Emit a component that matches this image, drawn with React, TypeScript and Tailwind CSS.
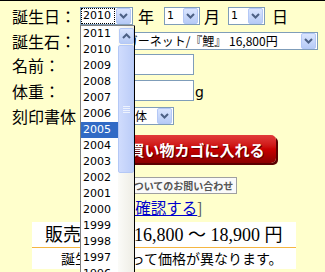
import React from "react";

const jp = { fontFamily: '"Noto Sans CJK JP", sans-serif' };
const ui = { fontFamily: '"DejaVu Sans", "Noto Sans CJK JP", sans-serif' };
const mincho = { fontFamily: '"Liberation Serif", "Noto Sans CJK JP", serif' };

const Chevron = ({ up }: { up?: boolean }) => (
	<svg width="9" height="6" viewBox="0 0 9 6">
		<polyline
			points={up ? "1,5 4.5,1.5 8,5" : "1,1 4.5,4.5 8,1"}
			fill="none"
			stroke="#4d6185"
			strokeWidth="2"
		/>
	</svg>
);

const ArrowBtn = ({ up }: { up?: boolean }) => (
	<div className="w-[15px] h-[16px] rounded-[2px] border border-[#b4c8f6] bg-gradient-to-b from-[#dae5fe] to-[#b7cbf6] flex items-center justify-center">
		<Chevron up={up} />
	</div>
);

const Select = ({ text, width, focus, kana, pad }: any) => (
	<div
		className={`${width} h-[18px] border border-[#7f9db9] bg-white flex items-center justify-between pl-[1px] pr-[1px] text-black ${
			kana ? "text-[12px]" : "text-[11px]"
		}`}
		style={kana ? jp : ui}
	>
		<span
			className={`${pad || "pl-[1px]"} pr-[3px] leading-[14px] whitespace-nowrap overflow-hidden ${
				focus ? "outline outline-1 outline-dotted outline-black" : ""
			}`}
		>
			{text}
		</span>
		<ArrowBtn />
	</div>
);

const years = [
	2011, 2010, 2009, 2008, 2007, 2006, 2005, 2004, 2003, 2002, 2001, 2000,
	1999, 1998, 1997, 1996,
];

const App = () => {
	return (
		<div className="relative w-[325px] h-[272px] overflow-hidden bg-[#ffffcc] border-t border-black text-black">
			<div className="pt-[2px]">
				{/* birthday */}
				<div className="h-[26px] flex items-center">
					<span className="w-[80px] pl-[12px] text-[16px]" style={jp}>
						誕生日：
					</span>
					<Select text="2010" width="w-[53px]" focus />
					<span className="ml-[5px] w-[26px] text-[16px]" style={jp}>
						年
					</span>
					<Select text="1" width="w-[36px]" />
					<span className="ml-[4px] w-[24px] text-[16px]" style={jp}>
						月
					</span>
					<Select text="1" width="w-[37px]" />
					<span className="ml-[7px] text-[16px]" style={jp}>
						日
					</span>
				</div>
				{/* birthstone */}
				<div className="h-[23px] flex items-center">
					<span className="w-[80px] pl-[12px] text-[16px]" style={jp}>
						誕生石：
					</span>
					<Select text="【1月】ガーネット/『鯉』 16,800円" width="w-[238px]" kana />
				</div>
				<div className="h-[25px] flex items-center">
					<span className="w-[80px] pl-[12px] text-[16px]" style={jp}>
						名前：
					</span>
					<div className="w-[114px] h-[21px] border border-[#7f9db9] bg-white" />
				</div>
				<div className="h-[27px] flex items-center">
					<span className="w-[80px] pl-[12px] text-[16px]" style={jp}>
						体重：
					</span>
					<div className="w-[114px] h-[21px] border border-[#7f9db9] bg-white" />
					<span className="ml-[1px] mt-[4px] text-[14px]" style={ui}>
						g
					</span>
				</div>
				<div className="h-[24px] flex items-center">
					<span className="w-[80px] pl-[12px] text-[16px]" style={jp}>
						刻印書体
					</span>
					<Select text="ゴシック体" width="w-[94px]" kana pad="pl-[5px]" />
				</div>

				{/* cart button */}
				<div className="ml-[118px] mt-[7px] w-[158px] h-[28px] rounded-[5px] bg-gradient-to-b from-[#e23a3a] via-[#c80000] to-[#8a0000] shadow-[2px_2px_0_#5a0000] flex items-center justify-center">
					<span
						className="text-white font-bold text-[15px] leading-none [text-shadow:1px_1px_0_#600]"
						style={jp}
					>
						買い物カゴに入れる
					</span>
				</div>

				<div className="ml-[80px] mt-[14px] w-[157px] h-[17px] border border-[#a0a0a0] bg-[#fafafa] flex items-center justify-center">
					<span className="text-[10px] font-bold text-[#555] leading-none" style={jp}>
						この商品についてのお問い合わせ
					</span>
				</div>

				<div className="ml-[99px] mt-[5px] h-[18px] flex items-center text-[15.5px] leading-none" style={jp}>
					<span className="text-[#555]">[</span>
					<span className="text-[#0000cc] underline">在庫確認する</span>
					<span className="text-[#555]">]</span>
				</div>

				{/* price box */}
				<div className="ml-[32px] mt-[5px] w-[264px] bg-white">
					<div className="h-[25px] pl-[13px] flex items-center text-[18px] leading-none whitespace-nowrap" style={mincho}>
						<span>販売価格</span>
						<span className="ml-[17px]">16,800 ～ 18,900 円</span>
					</div>
					<div className="h-[1px] bg-[#f5b642]" />
					<div className="pl-[29px] pt-[3px] text-[14px] leading-[18px] whitespace-nowrap" style={mincho}>
						誕生石によって価格が異なります。
					</div>
				</div>
			</div>

			{/* opened year dropdown */}
			<div className="absolute left-[80px] top-[24px] w-[55px] h-[260px] bg-white border-l border-t border-[#7f7f7f] flex">
				<div className="w-[37px] flex flex-col text-[11px]" style={ui}>
					{years.map((y) => (
						<div
							key={y}
							className={`h-[16px] shrink-0 flex items-center pl-[2px] ${
								y === 2005 ? "bg-[#316ac5] text-white" : "text-black"
							}`}
						>
							{y}
						</div>
					))}
				</div>
				<div className="w-[16px] flex flex-col bg-gradient-to-r from-[#fbfbf8] to-[#eeede5] pt-[1px]">
					<div className="h-[17px] flex items-center justify-center">
						<ArrowBtn up />
					</div>
					<div className="mt-[1px] h-[128px] rounded-[2px] border border-[#b4c8f6] bg-gradient-to-r from-[#d0dcfd] to-[#bccdf8] flex items-center justify-center">
						<div className="flex flex-col gap-[1px]">
							<div className="w-[7px] h-[1px] bg-[#eef3fe]" />
							<div className="w-[7px] h-[1px] bg-[#eef3fe]" />
							<div className="w-[7px] h-[1px] bg-[#eef3fe]" />
							<div className="w-[7px] h-[1px] bg-[#eef3fe]" />
						</div>
					</div>
				</div>
				<div className="w-[1px] bg-black" />
			</div>
		</div>
	);
};

export default App;
